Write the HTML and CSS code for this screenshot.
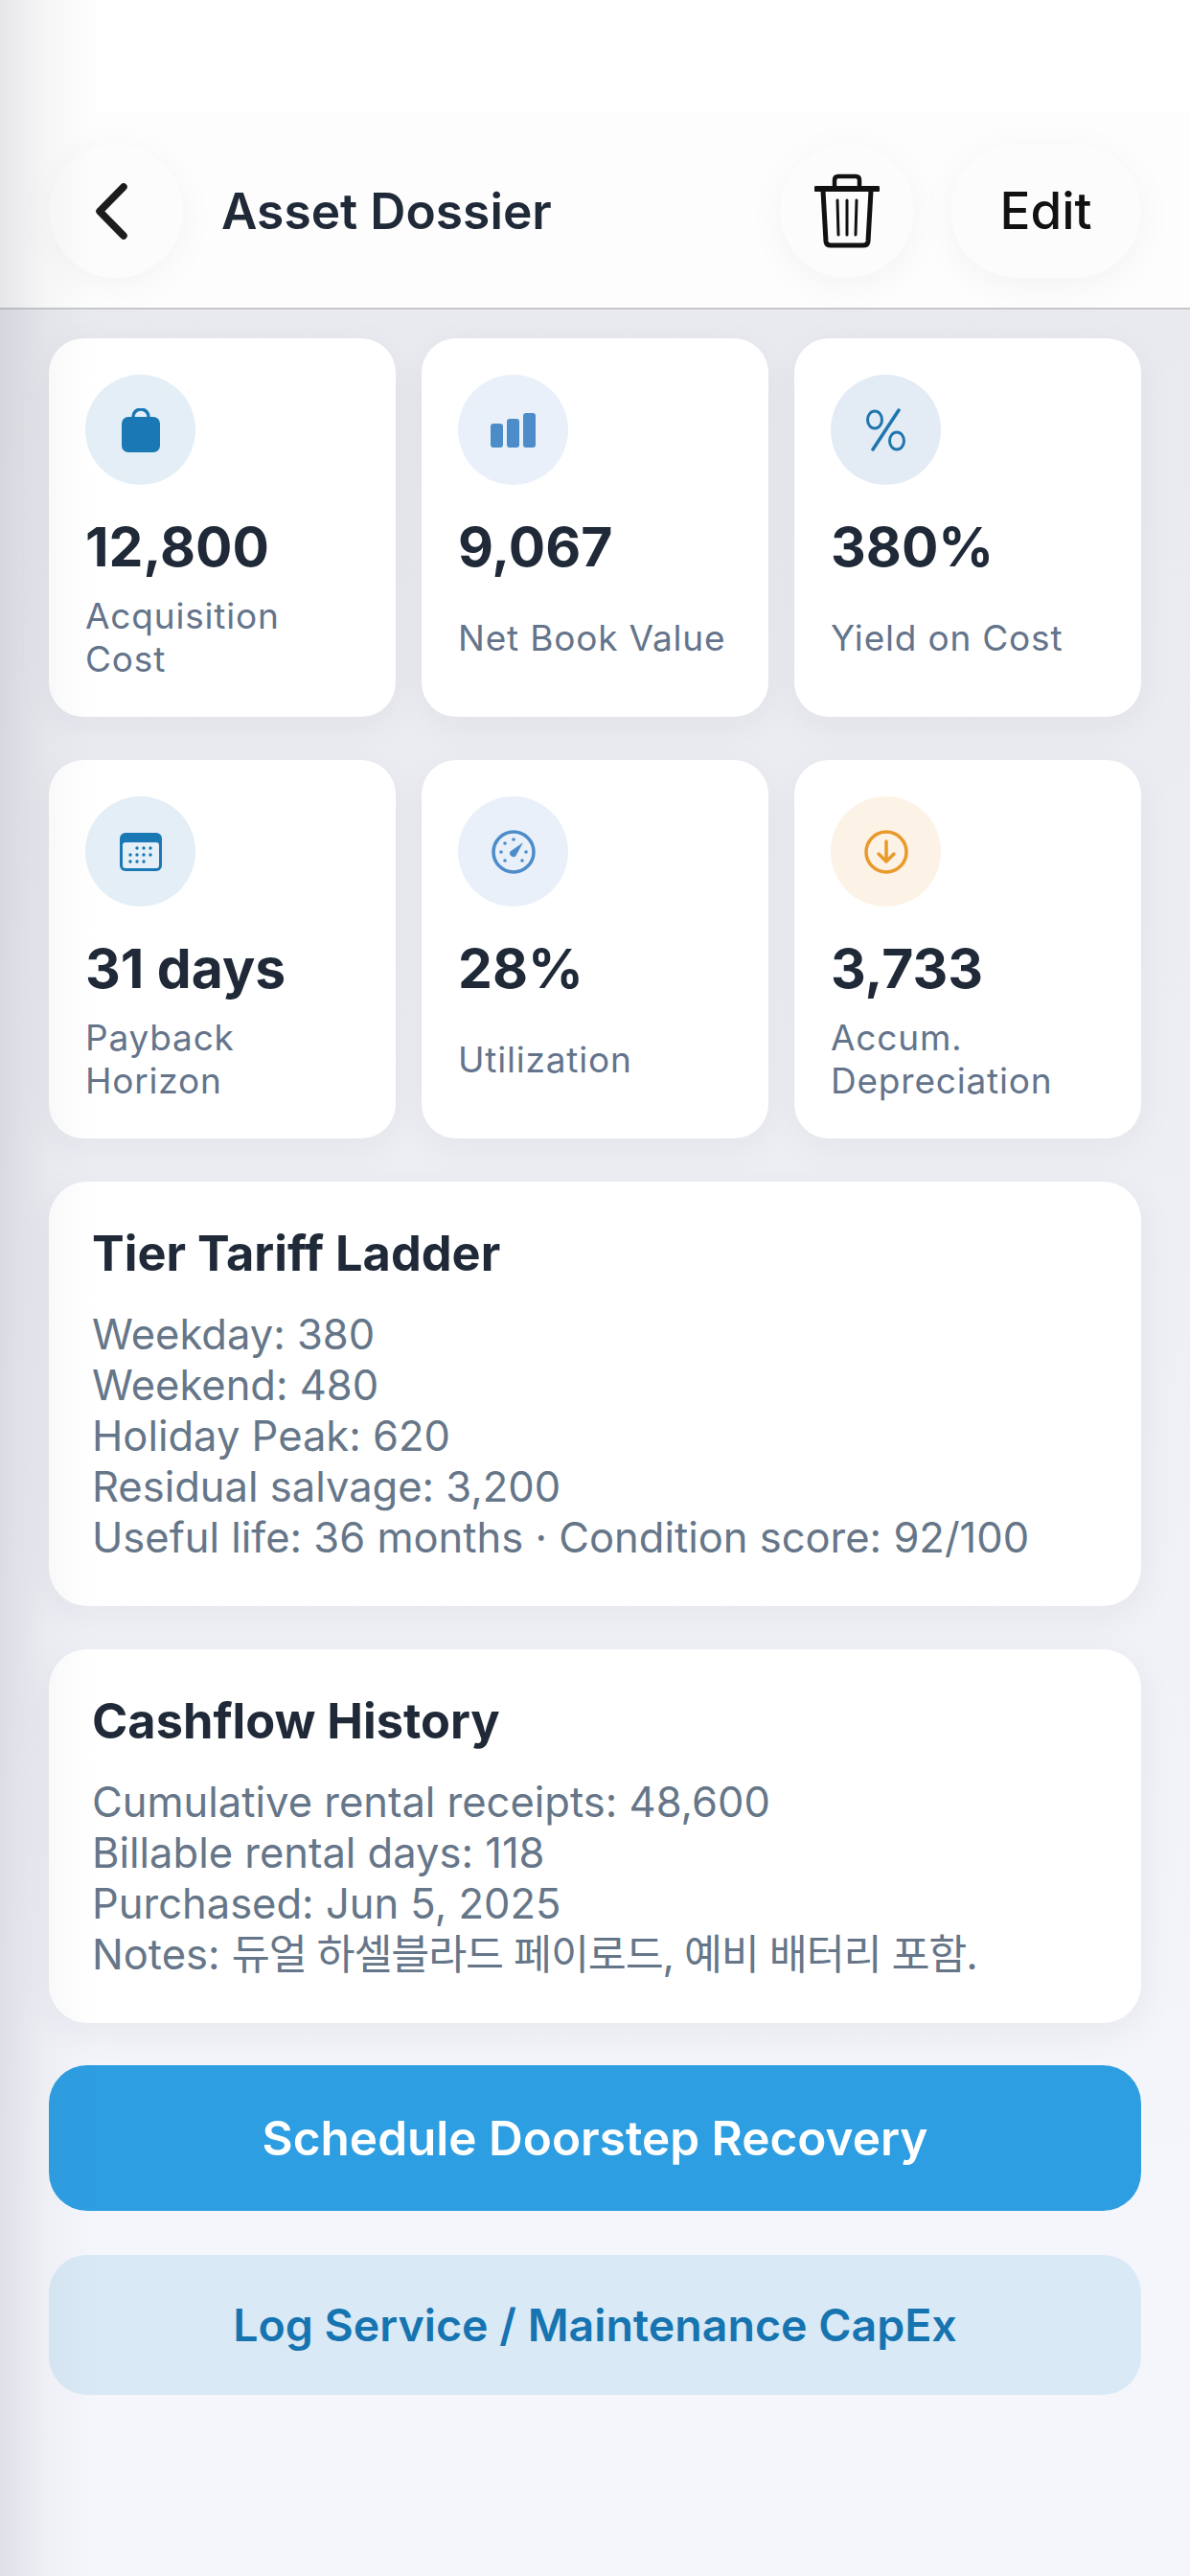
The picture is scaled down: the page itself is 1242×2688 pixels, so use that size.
FILE: index.html
```html
<!DOCTYPE html>
<html>
	<head>
		<meta charset="UTF-8" />
		<title>Asset Dossier</title>
		<link rel="stylesheet" href="styles.css">
	</head>
	<body>
		<div class="edge-shade"></div>
		<header class="top-bar">
			<div class="status-strip"></div>
			<div class="nav-row">
				<div class="circle-btn">
					<svg width="44" height="70" viewBox="0 0 44 70"><path d="M30 10 L5 35.500 L30 61" fill="none" stroke="#1c1c1e" stroke-width="7.500" stroke-linecap="round" stroke-linejoin="round"/></svg>
				</div>
				<h1 class="page-title">Asset Dossier</h1>
				<div class="circle-btn">
					<svg width="68" height="78" viewBox="0 0 68 78" fill="none" stroke="#111" stroke-linecap="round">
						<path d="M21 14 V7 Q21 3 25 3 H43 Q47 3 47 7 V14" stroke-width="4.500"/>
						<path d="M2 16 H66" stroke-width="6"/>
						<path d="M9 18 L12 71 Q12.500 75 17 75 H51 Q55.500 75 56 71 L59 18" stroke-width="5"/>
						<path d="M24 28 L25 64 M34 28 V64 M44 28 L43 64" stroke-width="3"/>
					</svg>
				</div>
				<div class="edit-btn">Edit</div>
			</div>
		</header>

		<main class="content">
			<section class="stat-grid">
				<div class="stat-card">
					<div class="stat-icon tint-a">
						<svg width="40" height="46" viewBox="0 0 40 46"><path d="M12 11 V9 A8 8 0 0 1 28 9 V11" fill="none" stroke="#1a78b5" stroke-width="3.500"/><rect y="9" width="40" height="37" rx="7" fill="#1a78b5"/></svg>
					</div>
					<div class="stat-value">12,800</div>
					<div class="stat-label">Acquisition<br>Cost</div>
				</div>
				<div class="stat-card">
					<div class="stat-icon tint-b">
						<svg width="48" height="36" viewBox="0 0 48 36" fill="#4c8cc9"><rect y="11" width="13" height="25" rx="3"/><rect x="17" y="6" width="13" height="30" rx="3"/><rect x="34" width="13" height="36" rx="3"/></svg>
					</div>
					<div class="stat-value">9,067</div>
					<div class="stat-label">Net Book Value</div>
				</div>
				<div class="stat-card">
					<div class="stat-icon tint-c">
						<svg width="44" height="46" viewBox="0 0 44 46" fill="none" stroke="#1f75ae" stroke-linecap="round"><ellipse cx="10" cy="12" rx="7.500" ry="9" stroke-width="3"/><ellipse cx="33" cy="34" rx="7.500" ry="9" stroke-width="3"/><path d="M35 2 L8 43" stroke-width="3.500"/></svg>
					</div>
					<div class="stat-value">380%</div>
					<div class="stat-label">Yield on Cost</div>
				</div>
				<div class="stat-card">
					<div class="stat-icon tint-a">
						<svg width="44" height="40" viewBox="0 0 44 40">
							<rect width="44" height="40" rx="6" fill="#1a78b5"/>
							<rect x="3" y="10" width="38" height="27" rx="3" fill="#e4eff7"/>
							<g fill="#1a78b5">
								<circle cx="18" cy="16" r="1.700"/><circle cx="25" cy="16" r="1.700"/><circle cx="32" cy="16" r="1.700"/>
								<circle cx="11" cy="23" r="1.700"/><circle cx="18" cy="23" r="1.700"/><circle cx="25" cy="23" r="1.700"/><circle cx="32" cy="23" r="1.700"/>
								<circle cx="11" cy="30" r="1.700"/><circle cx="18" cy="30" r="1.700"/><circle cx="25" cy="30" r="1.700"/>
							</g>
						</svg>
					</div>
					<div class="stat-value">31 days</div>
					<div class="stat-label">Payback<br>Horizon</div>
				</div>
				<div class="stat-card">
					<div class="stat-icon tint-b">
						<svg width="46" height="46" viewBox="0 0 46 46">
							<circle cx="23" cy="23" r="21" fill="none" stroke="#4c8cc9" stroke-width="3.500"/>
							<g fill="#4c8cc9">
								<circle cx="23" cy="10" r="1.800"/><circle cx="14" cy="14" r="1.800"/><circle cx="10" cy="23" r="1.800"/><circle cx="36" cy="23" r="1.800"/><circle cx="14" cy="32" r="1.800"/><circle cx="32" cy="32" r="1.800"/>
								<path d="M33 13 L25.500 27 A3.800 3.800 0 0 1 19.500 22.500 Z"/>
							</g>
						</svg>
					</div>
					<div class="stat-value">28%</div>
					<div class="stat-label">Utilization</div>
				</div>
				<div class="stat-card">
					<div class="stat-icon tint-d">
						<svg width="46" height="46" viewBox="0 0 46 46" fill="none" stroke="#e89a2c" stroke-linecap="round" stroke-linejoin="round"><circle cx="23" cy="23" r="21" stroke-width="3.500"/><path d="M23 12 V33 M15 25 L23 33 L31 25" stroke-width="3.500"/></svg>
					</div>
					<div class="stat-value">3,733</div>
					<div class="stat-label">Accum.<br>Depreciation</div>
				</div>
			</section>

			<section class="panel">
				<h2 class="panel-title">Tier Tariff Ladder</h2>
				<p class="panel-text">
					Weekday: 380<br>
					Weekend: 480<br>
					Holiday Peak: 620<br>
					Residual salvage: 3,200<br>
					Useful life: 36 months · Condition score: 92/100
				</p>
			</section>

			<section class="panel">
				<h2 class="panel-title">Cashflow History</h2>
				<p class="panel-text">
					Cumulative rental receipts: 48,600<br>
					Billable rental days: 118<br>
					Purchased: Jun 5, 2025<br>
					Notes: <span class="ko-text">듀얼 하셀블라드 페이로드, 예비 배터리 포함.</span>
				</p>
			</section>

			<div class="action-btn primary">Schedule Doorstep Recovery</div>
			<div class="action-btn secondary">Log Service / Maintenance CapEx</div>
		</main>
	</body>
</html>
```

FILE: styles.css
```css
* {
	box-sizing: border-box;
}
html, body {
	margin: 0;
	height: 2688px;
}
body {
	position: relative;
	overflow: hidden;
	background: linear-gradient(to bottom, #e8eaef 322px, #eceef3 1100px, #f1f3f8 1900px, #f4f6fb 2300px);
	font-family: Inter, "Noto Sans CJK KR", sans-serif;
	color: #1f2937;
}
.edge-shade {
	position: absolute;
	top: 0;
	left: 0;
	bottom: 0;
	width: 100px;
	z-index: 5;
	pointer-events: none;
	background: linear-gradient(to right, rgba(90, 95, 110, 0.14), rgba(90, 95, 110, 0.04) 50%, rgba(90, 95, 110, 0));
}
.top-bar {
	height: 323px;
	background: #fdfdfd;
	border-bottom: 2px solid #c6c8cc;
}
.status-strip {
	height: 118px;
	margin-left: 100px;
	background: #fff;
}
.nav-row {
	display: flex;
	align-items: center;
	margin-top: 32px;
	padding: 0 51px;
}
.circle-btn {
	display: flex;
	align-items: center;
	justify-content: center;
	width: 140px;
	height: 140px;
	border-radius: 50%;
	background: #fcfcfc;
	box-shadow: 0 8px 40px rgba(0, 0, 0, 0.045);
}
.page-title {
	flex: 1;
	margin: 0 0 0 40px;
	font-size: 51.500px;
	font-weight: 600;
}
.edit-btn {
	display: flex;
	align-items: center;
	justify-content: center;
	width: 199px;
	height: 140px;
	margin-left: 38px;
	border-radius: 70px;
	background: #fcfcfc;
	box-shadow: 0 8px 40px rgba(0, 0, 0, 0.045);
	color: #111;
	font-size: 53px;
	font-weight: 500;
}
.content {
	display: flex;
	flex-direction: column;
	padding: 30px 51px 0;
}
.stat-grid {
	display: grid;
	grid-template-columns: repeat(3, 1fr);
	gap: 45px 27px;
}
.stat-card {
	height: 395px;
	padding: 38px 38px 0;
	border-radius: 36px;
	background: #fff;
	box-shadow: 0 10px 40px rgba(30, 40, 60, 0.05);
}
.stat-icon {
	display: flex;
	align-items: center;
	justify-content: center;
	width: 115px;
	height: 115px;
	border-radius: 50%;
}
.tint-a { background: #e3eef6; }
.tint-b { background: #e9f0f9; }
.tint-c { background: #e3ecf5; }
.tint-d { background: #fdf2e6; }
.stat-value {
	margin-top: 31px;
	font-size: 57px;
	font-weight: 700;
	line-height: 68px;
}
.stat-label {
	display: flex;
	align-items: center;
	min-height: 90px;
	margin-top: 15px;
	color: #64748b;
	font-size: 37px;
	line-height: 45px;
	letter-spacing: 0.8px;
}
.panel {
	margin-top: 45px;
	padding: 45px 45px 0;
	border-radius: 40px;
	background: #fff;
	box-shadow: 0 10px 40px rgba(30, 40, 60, 0.06);
}
.panel-title {
	margin: 0;
	font-size: 50.500px;
	font-weight: 700;
	line-height: 60px;
}
.panel-text {
	margin: 28px 0 45px;
	color: #667689;
	font-size: 43.500px;
	line-height: 53px;
}
.ko-text {
	letter-spacing: -1.150px;
}
.action-btn {
	display: flex;
	align-items: center;
	justify-content: center;
	border-radius: 40px;
	font-weight: 600;
}
.primary {
	height: 152px;
	margin-top: 44px;
	background: #2d9ee2;
	color: #fff;
	font-size: 49.500px;
}
.secondary {
	height: 146px;
	margin-top: 46px;
	background: #d9e9f6;
	color: #1674b1;
	font-size: 46.500px;
}
```
